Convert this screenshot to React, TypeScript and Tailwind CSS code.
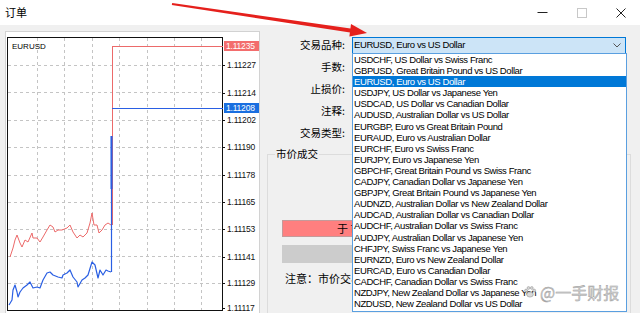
import React from "react";

const symbols = [
  "USDCHF, US Dollar vs Swiss Franc",
  "GBPUSD, Great Britain Pound vs US Dollar",
  "EURUSD, Euro vs US Dollar",
  "USDJPY, US Dollar vs Japanese Yen",
  "USDCAD, US Dollar vs Canadian Dollar",
  "AUDUSD, Australian Dollar vs US Dollar",
  "EURGBP, Euro vs Great Britain Pound",
  "EURAUD, Euro vs Australian Dollar",
  "EURCHF, Euro vs Swiss Franc",
  "EURJPY, Euro vs Japanese Yen",
  "GBPCHF, Great Britain Pound vs Swiss Franc",
  "CADJPY, Canadian Dollar vs Japanese Yen",
  "GBPJPY, Great Britain Pound vs Japanese Yen",
  "AUDNZD, Australian Dollar vs New Zealand Dollar",
  "AUDCAD, Australian Dollar vs Canadian Dollar",
  "AUDCHF, Australian Dollar vs Swiss Franc",
  "AUDJPY, Australian Dollar vs Japanese Yen",
  "CHFJPY, Swiss Franc vs Japanese Yen",
  "EURNZD, Euro vs New Zealand Dollar",
  "EURCAD, Euro vs Canadian Dollar",
  "CADCHF, Canadian Dollar vs Swiss Franc",
  "NZDJPY, New Zealand Dollar vs Japanese Yen",
  "NZDUSD, New Zealand Dollar vs US Dollar",
];

const redPts =
  "10,257 13,248 15,240 17,235 20,243 22,247 25,240 28,242 32,233 33,238 37,238 40,242 43,237 47,230 50,225 53,227 55,232 58,230 62,230 67,228 70,225 73,232 77,238 80,235 83,237 87,233 90,223 92,213 94,225 97,225 99,233 102,230 105,225 108,223 111,225";
const bluePts =
  "9,305 12,300 13,290 15,285 17,292 18,297 20,292 23,288 27,285 30,282 33,288 37,287 40,288 43,280 47,273 50,272 53,275 58,277 62,278 63,275 67,273 70,270 73,277 77,282 78,287 82,280 85,278 88,275 92,262 95,265 98,278 100,270 103,275 106,270 108,271 111,272";

const axis: [number, string][] = [
  [65, "1.11227"],
  [93, "1.11214"],
  [120, "1.11202"],
  [147, "1.11190"],
  [175, "1.11178"],
  [202, "1.11165"],
  [229, "1.11153"],
  [257, "1.11141"],
  [283, "1.11129"],
  [308, "1.11117"],
];

function Chart() {
  const vx = [37, 64, 92, 119, 147, 174, 201];
  const hy = [65, 92, 120, 147, 175, 202, 229, 256, 283];
  return (
    <svg width="253" height="290" viewBox="6 32 253 290" className="block">
      <rect x="7.5" y="37.5" width="215" height="273" fill="#fff" stroke="#111" strokeWidth="1" />
      {vx.map((x) => (
        <line key={"v" + x} x1={x + 0.5} y1="38" x2={x + 0.5} y2="310" stroke="#c4c4c4" strokeDasharray="3 3" />
      ))}
      {hy.map((y) => (
        <line key={"h" + y} x1="8" y1={y + 0.5} x2="222" y2={y + 0.5} stroke="#c4c4c4" strokeDasharray="3 3" />
      ))}
      {axis.map(([y]) => (
        <line key={"t" + y} x1="222" y1={y + 0.5} x2="225" y2={y + 0.5} stroke="#111" />
      ))}
      <text x="12" y="46" fontSize="8" fontFamily="Liberation Sans, sans-serif" dominantBaseline="central" fill="#000">
        EURUSD
      </text>
      {axis.map(([y, t]) => (
        <text key={t} x="227" y={y} fontSize="8.5" letterSpacing="-0.2" fontFamily="Liberation Sans, sans-serif" dominantBaseline="central" fill="#111">
          {t}
        </text>
      ))}
      <polyline points={redPts} fill="none" stroke="#ec6a6a" strokeWidth="1" strokeLinejoin="round" />
      <polyline points={bluePts} fill="none" stroke="#2a5fe3" strokeWidth="1.2" strokeLinejoin="round" />
      <line x1="112.5" y1="46" x2="112.5" y2="225" stroke="#ec6a6a" strokeWidth="1" />
      <line x1="112" y1="46.5" x2="223" y2="46.5" stroke="#ec6a6a" strokeWidth="1" />
      <line x1="111.5" y1="136" x2="111.5" y2="272" stroke="#2a5fe3" strokeWidth="1.2" />
      <line x1="111.5" y1="136" x2="111.5" y2="189" stroke="#2a5fe3" strokeWidth="2" />
      <line x1="112" y1="108.5" x2="223" y2="108.5" stroke="#2a5fe3" strokeWidth="1.2" />
      <rect x="224" y="41" width="35" height="10" fill="#f36d6d" />
      <text x="226" y="46" fontSize="8.5" letterSpacing="-0.2" fontFamily="Liberation Sans, sans-serif" dominantBaseline="central" fill="#fff">
        1.11235
      </text>
      <rect x="224" y="103" width="35" height="10" fill="#1a6fe0" />
      <text x="226" y="108" fontSize="8.5" letterSpacing="-0.2" fontFamily="Liberation Sans, sans-serif" dominantBaseline="central" fill="#fff">
        1.11208
      </text>
    </svg>
  );
}

export default function App() {
  const labels = ["交易品种:", "手数:", "止损价:", "注释:", "交易类型:"];
  return (
    <div className="relative w-[640px] h-[313px] overflow-hidden bg-[#f0f0f0] font-['Liberation_Sans',sans-serif] text-black">
      {/* title bar */}
      <div className="flex h-[25px] items-center bg-white">
        <span className="pl-[5px] text-[11px] font-['Noto_Sans_CJK_SC',sans-serif]">订单</span>
        <div className="ml-auto flex h-full">
          <div className="flex w-[39px] items-center justify-center">
            <svg width="11" height="11" viewBox="0 0 11 11">
              <line x1="0.5" y1="5.5" x2="10.5" y2="5.5" stroke="#222" strokeWidth="1" />
            </svg>
          </div>
          <div className="flex w-[39px] items-center justify-center">
            <svg width="10" height="10" viewBox="0 0 10 10">
              <rect x="0.5" y="0.5" width="9" height="9" fill="none" stroke="#c8c8c8" strokeWidth="1" />
            </svg>
          </div>
          <div className="flex w-[39px] items-center justify-center">
            <svg width="10" height="10" viewBox="0 0 10 10">
              <path d="M0.5 0.5 L9.5 9.5 M9.5 0.5 L0.5 9.5" stroke="#222" strokeWidth="1" />
            </svg>
          </div>
        </div>
      </div>

      {/* body */}
      <div className="flex h-[288px]">
        <div className="ml-[5px] mt-[6px] h-[290px] w-[255px] shrink-0 overflow-hidden border border-[#d2d2d2] bg-white">
          <Chart />
        </div>

        <div className="flex flex-1 flex-col pt-[9px]">
          {labels.map((l, i) => (
            <div key={l} className="flex h-[22px] shrink-0 items-center">
              <div className="w-[85px] text-right text-[10.5px] font-['Noto_Sans_CJK_SC',sans-serif]">{l}</div>
              {i === 0 && (
                <div className="ml-[7px] flex h-[17px] w-[274px] items-center border border-[#0078d7] bg-[#cce4f7] pl-[1px] pr-[4px]">
                  <span className="text-[9.5px] tracking-[-0.4px]">EURUSD, Euro vs US Dollar</span>
                  <svg className="ml-auto" width="8" height="5" viewBox="0 0 8 5">
                    <path d="M0.5 0.5 L4 4 L7.5 0.5" fill="none" stroke="#555" strokeWidth="1" />
                  </svg>
                </div>
              )}
            </div>
          ))}

          <div className="relative ml-[7px] mt-[10px] h-[200px] w-[364px] shrink-0 border border-[#dcdcdc] pl-[14px] pt-[65px]">
            <span className="absolute left-[7px] top-[-8px] bg-[#f0f0f0] px-[1px] text-[10.5px] leading-[14px] font-['Noto_Sans_CJK_SC',sans-serif]">
              市价成交
            </span>
            <div className="flex h-[17px] w-[320px] items-center border border-[#c49a9a] bg-[#ff7f7f] text-[11px] font-['Noto_Sans_CJK_SC',sans-serif]">
              <span className="ml-[54px]">于 市价</span>
            </div>
            <div className="mt-[8px] h-[18px] w-[320px] bg-[#cccccc]" />
            <div className="ml-[3px] mt-[8px] w-[300px] overflow-hidden whitespace-nowrap text-[11px] leading-[14px] font-['Noto_Sans_CJK_SC',sans-serif]">
              注意：市价交易将以当前市场价格执行
            </div>
          </div>
        </div>
      </div>

      {/* dropdown list */}
      <div className="absolute left-[352px] top-[53px] h-[259px] w-[275px] overflow-hidden border border-[#5a9fe0] bg-white">
        {symbols.map((s) => (
          <div
            key={s}
            className={
              s.startsWith("EURUSD")
                ? "h-[11.1px] whitespace-nowrap bg-[#0078d7] pl-[1px] text-[9.5px] leading-[11.1px] tracking-[-0.4px] text-white"
                : "h-[11.1px] whitespace-nowrap pl-[1px] text-[9.5px] leading-[11.1px] tracking-[-0.4px] text-black"
            }
          >
            {s}
          </div>
        ))}
      </div>

      {/* watermark */}
      <div className="absolute left-[523px] top-[283px] flex items-center gap-[2px] text-[16px] leading-[18px] text-[#d0d0d0] font-['Noto_Sans_CJK_SC',sans-serif] [-webkit-text-stroke:0.4px_#9a9a9a]">
        <svg width="14" height="14" viewBox="0 0 14 14" className="mr-[1px]">
          <g fill="#d8d8d8" stroke="#9a9a9a" strokeWidth="0.6">
            <ellipse cx="7" cy="9.5" rx="3.2" ry="2.6" />
            <circle cx="3" cy="5.5" r="1.4" />
            <circle cx="5.5" cy="3" r="1.4" />
            <circle cx="8.8" cy="3" r="1.4" />
            <circle cx="11.2" cy="5.5" r="1.4" />
          </g>
        </svg>
        <span>@一手财报</span>
      </div>

      {/* red arrow */}
      <svg className="pointer-events-none absolute left-0 top-0" width="640" height="313" viewBox="0 0 640 313">
        <polygon points="171.8,5 172.2,3 352.3,28.8 351.7,32.7" fill="#e5201c" />
        <polygon points="367,33 351,24 349.4,36.5" fill="#e5201c" />
      </svg>
    </div>
  );
}
